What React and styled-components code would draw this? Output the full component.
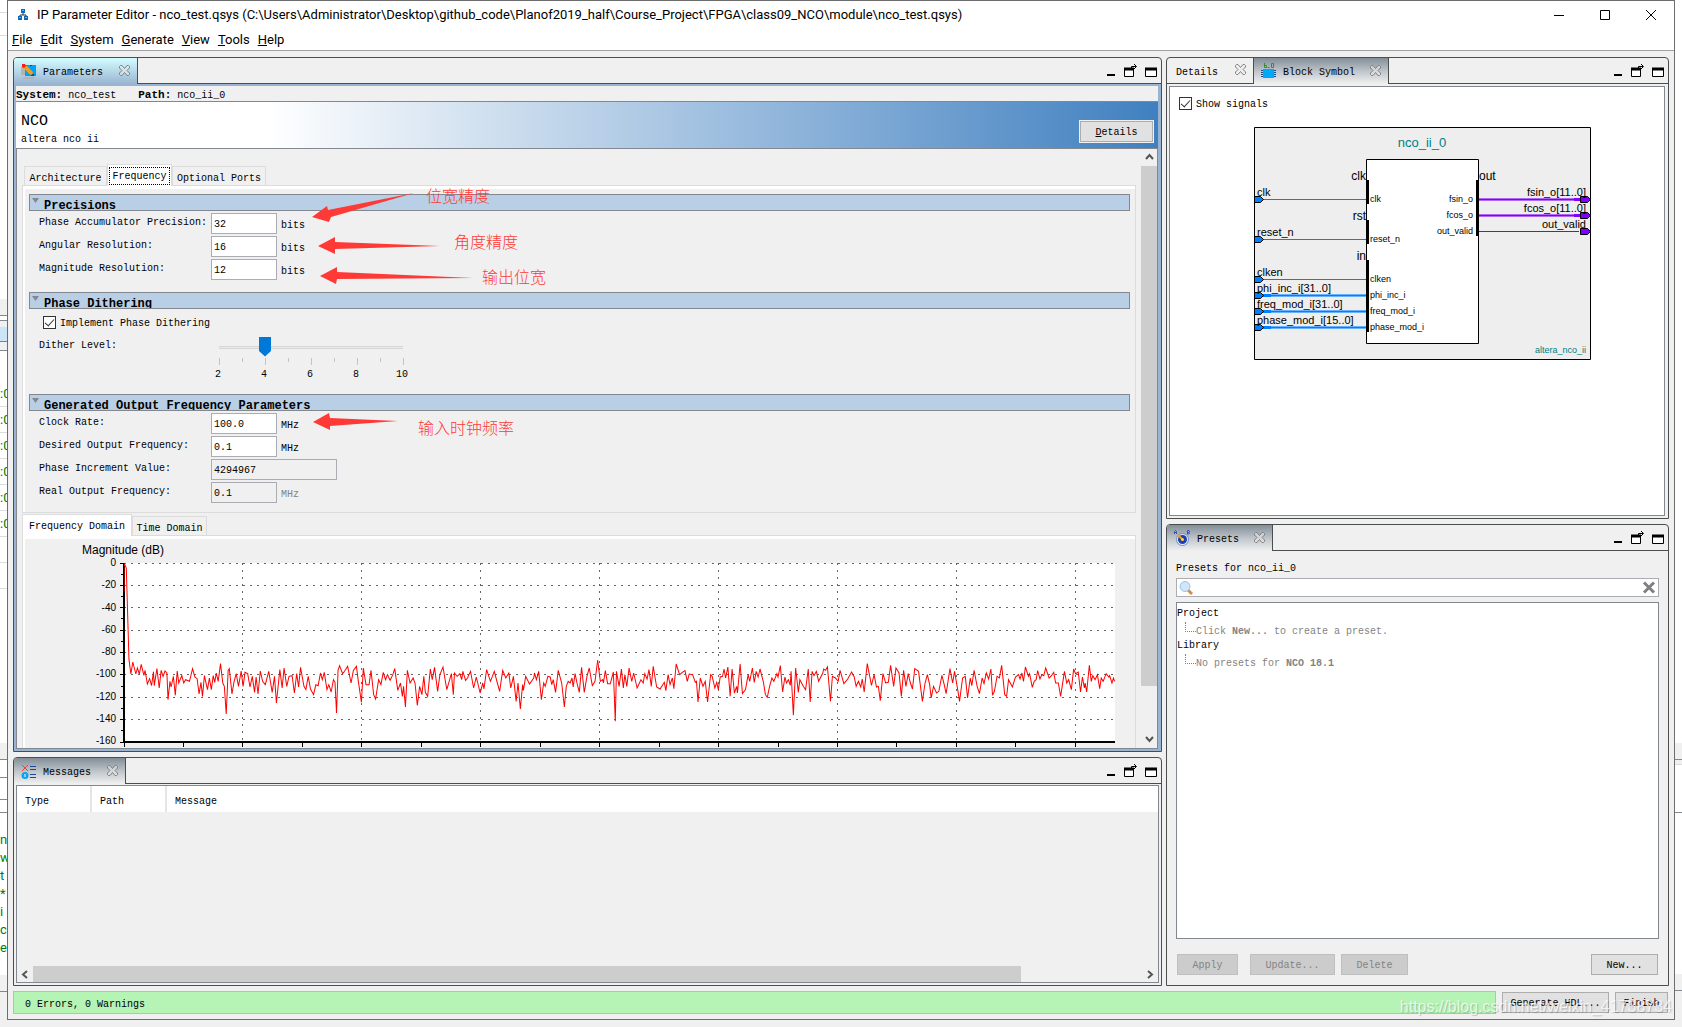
import React, { useState } from "react";
import styled, { createGlobalStyle } from "styled-components";

const mono = `"Liberation Mono", "Noto Sans CJK SC", monospace`;
const sans = `"Liberation Sans", "Noto Sans CJK SC", sans-serif`;
const ui = `Roboto, "Noto Sans CJK SC", sans-serif`;

const GlobalStyle = createGlobalStyle`
  * {
    box-sizing: border-box;
  }
  body {
    margin: 0;
    background: #f0f0f0;
    color: #000;
    font-family: ${mono};
    font-size: 10px;
    line-height: 12px;
    overflow: hidden;
  }
  button, input {
    font: inherit;
    color: inherit;
    margin: 0;
    padding: 0;
  }
`;

/* ---------- desktop and window frame ---------- */

const Desktop = styled.div`
  position: relative;
  display: flex;
  height: 100vh;
  background: #f0f0f0;
`;

const Strip = styled.div`
  flex: none;
  width: 7px;
  overflow: hidden;
  display: flex;
  flex-direction: column;
  background: #fff;
`;

const StripPart = styled.div`
  flex: none;
  height: ${(p) => p.$h}px;
  background: ${(p) => p.$bg || "#fff"};
  border-bottom: 1px solid ${(p) => p.$line || "transparent"};
  display: flex;
  align-items: center;
  overflow: hidden;
  color: #008000;
  font-family: ${ui};
  font-size: 13px;
  white-space: nowrap;
`;

const Window = styled.div`
  flex: 1;
  min-width: 0;
  margin-bottom: 7px;
  border: 1px solid #6d6d6d;
  background: #f0f0f0;
  display: flex;
  flex-direction: column;
`;

const TitleBar = styled.header`
  flex: none;
  height: 27px;
  background: #fff;
  display: flex;
  align-items: center;
  padding: 0 17px 0 10px;
  gap: 9px;
  font-family: ${ui};
  font-size: 13px;
`;

const WindowTitle = styled.h1`
  flex: 1;
  margin: 0;
  font-size: 13px;
  font-weight: 400;
  line-height: 20px;
  white-space: nowrap;
`;

const WindowButtons = styled.div`
  display: flex;
  gap: 34px;
`;

const PlainButton = styled.button`
  border: 0;
  background: none;
  display: flex;
`;

const MenuBar = styled.nav`
  flex: none;
  height: 23px;
  background: #fff;
  border-bottom: 1px solid #a0a0a0;
  display: flex;
  gap: 8px;
  padding-left: 4px;
  font-family: ${ui};
  font-size: 13px;
  line-height: 24px;
`;

const MenuItem = styled.button`
  border: 0;
  background: none;
`;

const Workspace = styled.main`
  flex: 1;
  min-height: 0;
  display: grid;
  grid-template-columns: minmax(0, 1fr) 503px;
  gap: 4px;
  padding: 6px 5px 0;
`;

const Column = styled.div`
  min-height: 0;
  display: flex;
  flex-direction: column;
  gap: 5px;
`;

/* ---------- dockable panel ---------- */

const PanelBox = styled.section`
  flex: ${(p) => (p.$height ? `0 0 ${p.$height}px` : "1 1 0")};
  min-height: 0;
  border: 1px solid #4a4e4e;
  border-radius: 4px 4px 0 0;
  overflow: hidden;
  display: flex;
  flex-direction: column;
`;

const TabStrip = styled.div`
  flex: none;
  height: 26px;
  display: flex;
`;

const tabFill = {
  focused: "linear-gradient(#d5fdff, #99b4d1)",
  active: "linear-gradient(#828e98, #c4c9ce 55%, #f0f0f0)",
  none: "none",
};

const DockTab = styled.div`
  display: flex;
  align-items: center;
  width: ${(p) => p.$width}px;
  padding: 0 7px;
  background: ${(p) => tabFill[p.$state]};
  border-right: 1px solid #4a4e4e;
  border-bottom: ${(p) => (p.$state === "none" ? "1px solid #4a4e4e" : "0")};

  svg {
    flex: none;
  }
`;

const DockTabLabel = styled.span`
  flex: 1;
  padding: 4px 0 0 ${(p) => (p.$icon ? 7 : 2)}px;
  white-space: nowrap;
`;

const StripRest = styled.div`
  flex: 1;
  display: flex;
  justify-content: flex-end;
  align-items: center;
  gap: 8px;
  padding: 1px 4px 0 0;
  border-bottom: 1px solid #4a4e4e;
`;

const CloseIcon = () => (
  <svg width="11" height="13" viewBox="0 0 11 13" fill="#eee" fillOpacity=".5" stroke="#808080">
    <path d="M.5 1.500l1-1h1.500l2.500 3 2.500-3h1.500l1 1v1.500l-2.500 2.500 2.500 2.500v1.500l-1 1h-1.500l-2.500-3-2.500 3h-1.500l-1-1v-1.500l2.500-2.500-2.500-2.500z" />
  </svg>
);

const MinimizeIcon = () => (
  <svg width="8" height="14">
    <path d="M0 10h8v2H0z" />
  </svg>
);

const FloatIcon = () => (
  <svg width="14" height="14" fill="none" stroke="#000">
    <path d="M1.500 4.500h9v8h-9z" fill="#fff" />
    <path d="M1 5h10" strokeWidth="3" />
    <path d="M8.500 4V2.500H13M11 0l2.500 2.500L11 5" />
  </svg>
);

const MaximizeIcon = () => (
  <svg width="12" height="14" fill="none" stroke="#000">
    <path d="M.5 4.500h11v8H.5z" fill="#fff" />
    <path d="M0 5h12" strokeWidth="3" />
  </svg>
);

const Panel = ({ tabs, height, children }) => (
  <PanelBox $height={height}>
    <TabStrip>
      {tabs.map((tab) => (
        <DockTab key={tab.label} $width={tab.width} $state={tab.state}>
          {tab.icon}
          <DockTabLabel $icon={!!tab.icon}>{tab.label}</DockTabLabel>
          <PlainButton aria-label={`Close ${tab.label}`}>
            <CloseIcon />
          </PlainButton>
        </DockTab>
      ))}
      <StripRest>
        <PlainButton aria-label="Minimize panel">
          <MinimizeIcon />
        </PlainButton>
        <PlainButton aria-label="Detach panel">
          <FloatIcon />
        </PlainButton>
        <PlainButton aria-label="Maximize panel">
          <MaximizeIcon />
        </PlainButton>
      </StripRest>
    </TabStrip>
    {children}
  </PanelBox>
);

/* ---------- icons ---------- */

const AppIcon = () => (
  <svg width="10" height="11" viewBox="0 0 10 11">
    <path d="M5 3v3M2 8V6h6v2" fill="none" stroke="#333" />
    <path d="M3 0h4v4H3zM0 7h4v4H0zM6 7h4v4H6z" fill="#1268b8" />
    <path d="M4 1h2v1H4zM1 8h2v1H1zM7 8h2v1H7z" fill="#4db8ff" />
  </svg>
);

const ParametersIcon = () => (
  <svg width="15" height="15" viewBox="0 0 15 15">
    <path d="M0 3h5v8H0zM2 13h11v2H2z" fill="#b4b4b4" />
    <path d="M4 1h11v11H4z" fill="#00a2f3" />
    <path d="M4 1h2v2H4zM9 1h2v1H9zM10 10h3v2h-3z" fill="#174a8c" />
    <path d="M2 3l3-2 7 7-1 3-3-1z" fill="#f0a020" />
    <path d="M1 0h3l1 2-2 2-2-1z" fill="#f02020" />
  </svg>
);

const BlockIcon = () => (
  <svg width="15" height="16" viewBox="0 0 15 16" fill="none">
    <path d="M3.500 0v4.500h2v-2h-2M6.500 4.500h2M10.500.5h2v4h-2z" stroke="#3a8a3a" />
    <path d="M0 7.500h15M0 9.500h15M0 11.500h15M0 13.500h15" stroke="#174a8c" />
    <path d="M2 6h11v9H2z" fill="#00a8fa" />
  </svg>
);

const PresetsIcon = () => (
  <svg width="16" height="16" viewBox="0 0 16 16">
    <circle cx="8.500" cy="9.500" r="6.500" fill="#6f90dc" />
    <circle cx="8.500" cy="9.500" r="5.500" fill="#e4ecfc" />
    <circle cx="8.500" cy="9.500" r="4.500" fill="#1c3fa8" />
    <path d="M4 5l4.500 4.500" stroke="#f0a020" strokeWidth="2" />
    <circle cx="8.500" cy="9.500" r="1.500" fill="#ffd070" />
    <path d="M.5 4V1.500l1-1 1 1V4M.5 2.500h2M13.500 4V.5h1.500l.5 1-.5 1 .5 1-.5.5zM13.500 2.500H15" fill="none" stroke="#3454c0" />
  </svg>
);

const MessagesIcon = () => (
  <svg width="15" height="15" viewBox="0 0 15 15" fill="none">
    <path d="M1 1l6 6M7 1L1 7" stroke="#f04030" />
    <circle cx="4" cy="11.500" r="3.500" fill="#10a0f0" />
    <path d="M4 10v3" stroke="#fff" />
    <path d="M9 2.500h6M9 5.500h6M9 10.500h6M9 13.500h6" stroke="#1848a0" />
  </svg>
);

const SearchIcon = () => (
  <svg width="14" height="14" viewBox="0 0 14 14">
    <path d="M9 9l4 4" stroke="#d09048" strokeWidth="3" />
    <circle cx="6" cy="5.500" r="5" fill="#cfe6fa" stroke="#9cc0e0" />
  </svg>
);

const ClearIcon = () => (
  <svg width="14" height="13" viewBox="0 0 14 13">
    <path d="M2 1.500l10 10M12 1.500l-10 10" stroke="#808080" strokeWidth="3" />
  </svg>
);

const chevrons = {
  up: "M1 6l3.500-4L8 6",
  down: "M1 2l3.500 4L8 2",
  left: "M6 1L2 4.500 6 8",
  right: "M2 1l4 3.500L2 8",
};

const Chevron = ({ dir }) => (
  <svg width="9" height="9" fill="none" stroke="#555" strokeWidth="2">
    <path d={chevrons[dir]} />
  </svg>
);

/* ---------- parameters panel ---------- */

const ParametersBody = styled.div`
  flex: 1;
  min-height: 0;
  border: solid #99b4d1;
  border-width: 2px 3px 2px 2px;
  display: flex;
  flex-direction: column;
`;

const PathRow = styled.div`
  flex: none;
  height: 16px;
  display: flex;
  gap: 22px;
  line-height: 18px;
  border-bottom: 1px solid #828790;
  white-space: pre;

  b {
    font-size: 11px;
  }
`;

const Banner = styled.div`
  flex: none;
  height: 47px;
  display: flex;
  justify-content: space-between;
  align-items: flex-end;
  padding: 0 5px 2px;
  background: linear-gradient(90deg, #fff 22%, #4080c0);
  border-bottom: 1px solid #828790;
`;

const BannerTitle = styled.h2`
  margin: 0;
  font-size: 15px;
  font-weight: 400;
  line-height: 24px;
`;

const BannerAction = styled.div`
  display: flex;
  padding-bottom: 4px;
`;

const Button = styled.button`
  height: 21px;
  width: ${(p) => p.$width}px;
  background: #e1e1e1;
  border: 1px solid #adadad;
  outline: ${(p) => (p.$ring ? "1px solid #f0f0f0" : "0")};
  padding-top: 3px;

  &:disabled {
    background: #ccc;
    border-color: #bfbfbf;
    color: #838383;
  }
`;

const ScrollArea = styled.div`
  flex: 1;
  min-height: 0;
  display: flex;
  border: 1px solid #828790;
  border-top: 0;
`;

const ScrollContent = styled.div`
  position: relative;
  flex: 1;
  min-width: 0;
  overflow: hidden;
  padding: 15px 5px 0;
`;

const ScrollBar = styled.div`
  flex: none;
  display: flex;
  flex-direction: ${(p) => (p.$horizontal ? "row" : "column")};
  justify-content: space-between;
  ${(p) => (p.$horizontal ? "height" : "width")}: 16px;
  background: #f0f0f0;
`;

const ScrollButton = styled.button`
  flex: none;
  width: 16px;
  height: 17px;
  border: 0;
  background: none;
  display: flex;
  align-items: center;
  justify-content: center;
`;

const Thumb = styled.div`
  flex: ${(p) => p.$share};
  background: #cdcdcd;
`;

const Space = styled.div`
  flex: ${(p) => p.$share};
`;

const PageTabs = styled.div`
  height: 21px;
  display: flex;
  align-items: flex-end;
  padding-left: ${(p) => p.$indent || 0}px;
`;

const PageTab = styled.button`
  position: relative;
  height: ${(p) => (p.$active ? 22 : 19)}px;
  width: ${(p) => p.$width}px;
  margin-bottom: ${(p) => (p.$active ? -1 : 0)}px;
  padding: ${(p) => (p.$active ? 0 : 2)}px 0 0;
  border: 1px solid #dcdcdc;
  border-bottom: 0;
  background: ${(p) => (p.$active ? "#fff" : "#f0f0f0")};
  white-space: nowrap;

  span {
    display: block;
    height: 18px;
    margin: 1px;
    line-height: ${(p) => (p.$active ? 18 : 16)}px;
    border: 1px ${(p) => (p.$focused ? "dotted #000" : "solid transparent")};
  }
`;

const Page = styled.div`
  border: 1px solid #dcdcdc;
  box-shadow: inset 2px 3px 0 #fff;
  padding: ${(p) => (p.$chart ? "6px 20px 20px" : "8px 5px 9px 6px")};
  display: flex;
  flex-direction: column;
  gap: ${(p) => (p.$chart ? 0 : 12)}px;
  margin-bottom: 1px;
`;

const SectionTitle = styled.h3`
  display: flex;
  align-items: flex-start;
  gap: 5px;
  height: 17px;
  margin: 0;
  padding: 0 0 0 2px;
  background: #b8cfe5;
  border: 1px solid #828790;
  font-size: 12px;
  line-height: 22px;
  overflow: hidden;

  svg {
    margin-top: 3px;
  }
`;

const Rows = styled.div`
  display: flex;
  flex-direction: column;
  gap: 2px;
  padding: 2px 0 0 10px;
`;

const Row = styled.div`
  display: flex;
  align-items: flex-start;
  height: 21px;
`;

const RowLabel = styled.label`
  width: 172px;
  line-height: 19px;
`;

const TextBox = styled.input`
  width: ${(p) => (p.$wide ? 126 : 66)}px;
  height: 21px;
  padding: 2px 2px 0;
  border: 1px solid #abadb3;
  background: #fff;

  &:read-only {
    background: #f0f0f0;
  }
`;

const Unit = styled.span`
  padding-left: 4px;
  line-height: 25px;
  color: ${(p) => (p.$dim ? "#838383" : "#000")};
`;

const CheckLabel = styled.label`
  display: flex;
  align-items: center;
  gap: 4px;
  height: 17px;
  line-height: 20px;
`;

const Check = styled.input`
  appearance: none;
  width: 13px;
  height: 13px;
  border: 1px solid #333;
  background: #fff;
  display: flex;
  justify-content: center;

  &:checked::after {
    content: "";
    width: 4px;
    height: 8px;
    border: solid #333;
    border-width: 0 1px 1px 0;
    transform: rotate(42deg);
  }
`;

const CheckText = styled.span`
  padding-top: 2px;
`;

const DitherRows = styled.div`
  display: flex;
  flex-direction: column;
  gap: 5px;
  padding: 5px 0 0 10px;

  ${CheckLabel} {
    padding-left: 4px;
  }
`;

const SliderRow = styled.div`
  display: flex;
  align-items: flex-start;
  height: 46px;
`;

const SliderBox = styled.div`
  display: flex;
  flex-direction: column;
  margin-left: 2px;
`;

const Slider = styled.input`
  appearance: none;
  width: 196px;
  height: 22px;
  background: none;

  &::-webkit-slider-runnable-track {
    height: 3px;
    background: linear-gradient(#d6d6d6 1px, #e7eaea 1px 2px, #d6d6d6 2px) center / calc(100% - 12px) 3px no-repeat;
  }

  &::-webkit-slider-thumb {
    appearance: none;
    width: 12px;
    height: 20px;
    margin-top: -9px;
    background: #0078d7;
    clip-path: polygon(0 0, 100% 0, 100% 72%, 50% 100%, 0 72%);
  }
`;

const SliderScale = () => (
  <svg width="196" height="24" fontFamily={mono} fontSize="10" textAnchor="middle">
    {[0, 1, 2, 3, 4, 5, 6, 7, 8].map((i) => (
      <path key={i} d={`M${6 + i * 23} 0v${i % 2 ? 4 : 7}`} stroke="#c4c4c4" shapeRendering="crispEdges" />
    ))}
    {[2, 4, 6, 8, 10].map((n, i) => (
      <text key={n} x={5 + i * 46} y="19">
        {n}
      </text>
    ))}
  </svg>
);

const Section = ({ title, children }) => (
  <div>
    <SectionTitle>
      <svg width="7" height="5">
        <path d="M0 0h7L3.500 5z" fill="#828790" />
      </svg>
      {title}
    </SectionTitle>
    {children}
  </div>
);

const Field = ({ id, label, value, unit, wide, readOnly }) => (
  <Row>
    <RowLabel htmlFor={id}>{label}</RowLabel>
    <TextBox id={id} defaultValue={value} $wide={wide} readOnly={readOnly} />
    {unit && <Unit $dim={readOnly}>{unit}</Unit>}
  </Row>
);

/* ---------- red hand notes over the form ---------- */

const NotesLayer = styled.svg`
  position: absolute;
  left: 0;
  top: 0;
  pointer-events: none;
  font-family: "Noto Sans CJK SC", sans-serif;
  font-size: 16px;
  font-weight: 300;
  fill: #ff3a36;
`;

const Notes = () => (
  <NotesLayer width="560" height="340">
    <path d="M295 68l15-11 1 4L397 44 314 68l-2 5z" />
    <path d="M301 97l17-9v5l105 4-105 3v5z" />
    <path d="M303 127l17-9v5l136 6-136 1-1 5z" />
    <path d="M296 273l16-9 1 5 68 3-68 5v4z" />
    <text x="409" y="53">位宽精度</text>
    <text x="437" y="99">角度精度</text>
    <text x="465" y="134">输出位宽</text>
    <text x="401" y="285">输入时钟频率</text>
  </NotesLayer>
);

/* ---------- frequency chart ---------- */

const ChartCaption = styled.div`
  padding-left: 39px;
  font-family: ${sans};
  font-size: 12px;
  line-height: 16px;
`;

const ChartRow = styled.div`
  display: flex;
  gap: 8px;
  padding-top: 5px;
`;

const AxisLabels = styled.div`
  width: 73px;
  height: 190px;
  margin-top: -6px;
  display: flex;
  flex-direction: column;
  justify-content: space-between;
  text-align: right;
  font-family: ${sans};
  font-size: 10px;
`;

const PlotSvg = styled.svg`
  flex: 1;
  height: 190px;
  overflow: visible;
`;

const levels = [0, -20, -40, -60, -80, -100, -120, -140, -160];

const lowerBand =
  "325,275 325,190 331,205 338,480 343,523 348,487 356,523 360,505 365,523 370,494 377,527 380,512 386,553 392,537 397,558 402,516 404,558 411,507 417,565 422,512 427,530 432,514 437,520 440,600 445,545 448,562 454,530 459,587 464,514 468,550 476,528 481,550 486,540 496,545 504,507 510,532 516,537 521,583 526,548 530,590 535,528 543,570 548,535 553,570 558,528 562,548 566,520 571,545 577,492 583,550 587,560 592,643 597,512 600,507 607,583 612,548 618,522 624,560 631,514 636,560 641,518 648,522 654,562 660,530 666,578 670,532 675,583 681,514 687,545 694,555 703,515 712,578 718,530 723,610 732,510 738,565 743,505 750,560 756,530 764,528 770,580 776,522 781,562 786,503 795,560 800,570 806,530 812,568 820,585 826,555 832,558 838,520 843,540 848,518 855,570 860,555 866,577 872,540 876,548 880,640 884,512 888,498 896,522 901,515 909,500 918,550 924,512 932,500 937,545 945,608 950,505 957,555 965,555 970,512 977,585 982,598 990,540 996,555 1002,518 1008,540 1013,525 1020,542 1027,525 1032,507 1040,572 1047,550 1052,590 1055,560 1060,622 1065,512 1072,550 1080,535 1085,550 1091,617 1097,560 1103,585 1108,530 1112,578 1118,590 1125,508 1130,540 1136,503 1144,575 1150,525 1158,502 1168,570 1180,522 1185,585 1188,520 1195,530 1202,522 1207,540 1210,515 1217,542 1222,535 1230,515 1238,565 1245,532 1255,580 1262,550 1265,568 1272,510 1282,545 1292,515 1300,550 1306,575 1314,512 1322,535 1330,520 1335,565 1342,530 1349,605 1354,550 1360,628 1366,555 1368,572 1374,530 1384,553 1395,535 1397,520 1402,540 1408,515 1415,600 1421,550 1425,560 1432,530 1438,532 1442,555 1446,540 1452,578 1459,512 1468,550 1475,622 1480,560 1485,545 1490,550 1495,535 1498,562 1503,522 1508,550 1514,578 1520,503 1527,578 1534,530 1540,505 1548,558 1555,545 1562,482";

const upperBand =
  "47,362 54,425 60,420 62,430 67,393 73,432 80,432 88,397 93,545 96,395 103,440 109,388 114,445 118,405 123,440 129,385 136,425 141,400 150,445 160,420 166,430 170,402 176,418 181,390 187,440 192,380 201,442 210,448 221,428 225,453 231,405 236,435 242,415 246,447 252,373 261,405 268,398 275,393 281,425 286,403 295,405 302,428 305,425 309,487 315,415 322,440 328,425 334,487 342,405 346,410 353,445 358,428 362,450 367,412 373,410 377,388 381,415 387,382 393,470 398,388 404,460 410,440 412,460 419,373 425,462 433,450 440,405 444,425 451,385 456,428 461,395 466,412 471,388 480,428 485,465 490,473 496,440 502,415 507,425 515,402 518,412 524,378 530,457 536,412 540,430 545,420 550,437 552,395 558,527 564,385 571,458 575,420 584,440 590,450 597,388 602,487 607,395 612,408 618,395 624,425 635,400 637,388 642,392 647,382 655,485 660,410 668,415 675,425 680,392 690,432 700,418 710,397 717,412 722,440 728,425 734,442 738,418 743,457 751,372 762,437 769,405 775,442 780,440 785,483 792,402 799,430 806,428 812,377 820,440 826,385 834,400 840,470 846,392 852,440 858,402 863,427 869,448 875,387 885,395 895,485 902,430 908,405 914,435 918,475 924,440 932,460 938,455 946,407 952,435 957,462 967,387 974,430 979,395 988,455 992,485 1000,415 1007,410 1013,475 1020,415 1024,438 1030,392 1038,440 1044,462 1051,415 1056,432 1062,400 1068,418 1074,388 1078,467 1083,455 1090,410 1096,415 1102,377 1110,465 1115,470 1120,420 1130,442 1138,412 1146,405 1150,418 1155,400 1159,425 1164,382 1172,410 1175,402 1182,443 1187,425 1192,420 1196,393 1202,418 1207,405 1212,408 1217,385 1226,415 1232,408 1238,398 1243,430 1250,430 1256,470 1266,395 1272,430 1277,420 1284,450 1290,388 1295,402 1302,397 1308,457 1313,412 1318,445 1320,430 1324,457 1331,377 1336,425 1340,408 1346,420 1352,405 1358,447 1362,415 1367,425 1375,402 1382,412 1384,408 1390,430 1394,415 1397,425";

const Plot = () => (
  <PlotSvg role="img" aria-label="Magnitude in dB by frequency">
    <rect width="100%" height="179" fill="#fff" />
    <g stroke="#666" strokeDasharray="2 5" shapeRendering="crispEdges">
      {levels.slice(0, -1).map((level) => (
        <line key={level} x1="0" x2="100%" y1={(-level * 179) / 160} y2={(-level * 179) / 160} />
      ))}
      {[12, 24, 36, 48, 60, 72, 84, 96].map((x) => (
        <line key={x} x1={`${x}%`} x2={`${x}%`} y1="0" y2="178" />
      ))}
    </g>
    <g stroke="#000" shapeRendering="crispEdges">
      {levels.map((level) => (
        <line key={level} x1="-4" x2="0" y1={(-level * 179) / 160} y2={(-level * 179) / 160} />
      ))}
      {levels.slice(1).map((level) => (
        <line key={level} x1="-3" x2="0" y1={((-level - 10) * 179) / 160} y2={((-level - 10) * 179) / 160} />
      ))}
      {Array.from({ length: 17 }, (_, i) => (
        <line key={i} x1={`${i * 6}%`} x2={`${i * 6}%`} y1="179" y2="184" />
      ))}
      <line x1="0" x2="0" y1="0" y2="179" strokeWidth="2" />
      <line x1="-1" x2="100%" y1="179" y2="179" strokeWidth="2" />
    </g>
    <svg width="100%" height="179" viewBox="0 0 2588 537" preserveAspectRatio="none" fill="none" stroke="#f00">
      <g transform="translate(-325 -190)">
        <polyline points={lowerBand} vectorEffect="non-scaling-stroke" />
      </g>
      <g transform="translate(1190 -70)">
        <polyline points={upperBand} vectorEffect="non-scaling-stroke" />
      </g>
    </svg>
  </PlotSvg>
);

const Parameters = () => {
  const [dither, setDither] = useState(4);
  return (
    <ParametersBody>
      <PathRow>
        <span>
          <b>System:</b> nco_test
        </span>
        <span>
          <b>Path:</b> nco_ii_0
        </span>
      </PathRow>
      <Banner>
        <div>
          <BannerTitle>NCO</BannerTitle>
          <div>altera nco ii</div>
        </div>
        <BannerAction>
          <Button $width={73} $ring>
            <u>D</u>etails
          </Button>
        </BannerAction>
      </Banner>
      <ScrollArea>
        <ScrollContent>
          <PageTabs $indent={2}>
            <PageTab $width={83}>
              <span>Architecture</span>
            </PageTab>
            <PageTab $width={65} $active $focused>
              <span>Frequency</span>
            </PageTab>
            <PageTab $width={94}>
              <span>Optional Ports</span>
            </PageTab>
          </PageTabs>
          <Page>
            <Section title="Precisions">
              <Rows>
                <Field id="phase-acc" label="Phase Accumulator Precision:" value="32" unit="bits" />
                <Field id="angular" label="Angular Resolution:" value="16" unit="bits" />
                <Field id="magnitude" label="Magnitude Resolution:" value="12" unit="bits" />
              </Rows>
            </Section>
            <Section title="Phase Dithering">
              <DitherRows>
                <CheckLabel>
                  <Check type="checkbox" defaultChecked />
                  <CheckText>Implement Phase Dithering</CheckText>
                </CheckLabel>
                <SliderRow>
                  <RowLabel htmlFor="dither">Dither Level:</RowLabel>
                  <SliderBox>
                    <Slider
                      id="dither"
                      type="range"
                      min="2"
                      max="10"
                      value={dither}
                      onChange={(e) => setDither(e.target.value)}
                    />
                    <SliderScale />
                  </SliderBox>
                </SliderRow>
              </DitherRows>
            </Section>
            <Section title="Generated Output Frequency Parameters">
              <Rows>
                <Field id="clock" label="Clock Rate:" value="100.0" unit="MHz" />
                <Field id="desired" label="Desired Output Frequency:" value="0.1" unit="MHz" />
                <Field id="increment" label="Phase Increment Value:" value="4294967" wide readOnly />
                <Field id="real" label="Real Output Frequency:" value="0.1" unit="MHz" readOnly />
              </Rows>
            </Section>
          </Page>
          <PageTabs>
            <PageTab $width={110} $active>
              <span>Frequency Domain</span>
            </PageTab>
            <PageTab $width={75}>
              <span>Time Domain</span>
            </PageTab>
          </PageTabs>
          <Page $chart>
            <ChartCaption>Magnitude (dB)</ChartCaption>
            <ChartRow>
              <AxisLabels>
                {levels.map((level) => (
                  <span key={level}>{level}</span>
                ))}
              </AxisLabels>
              <Plot />
            </ChartRow>
          </Page>
          <Notes />
        </ScrollContent>
        <ScrollBar>
          <ScrollButton aria-label="Scroll up">
            <Chevron dir="up" />
          </ScrollButton>
          <Thumb $share={522} />
          <Space $share={45} />
          <ScrollButton aria-label="Scroll down">
            <Chevron dir="down" />
          </ScrollButton>
        </ScrollBar>
      </ScrollArea>
    </ParametersBody>
  );
};

/* ---------- messages panel ---------- */

const MessagesBody = styled.div`
  flex: 1;
  margin: 1px 2px 2px;
  border: 1px solid #828790;
  display: flex;
  flex-direction: column;
  justify-content: space-between;
`;

const MessageTable = styled.table`
  width: 100%;
  table-layout: fixed;
  border-collapse: collapse;
  background: #fff;

  th {
    height: 26px;
    padding: 6px 8px 0;
    text-align: left;
    font-weight: 400;
    border-right: 2px solid #e5e5e5;
  }
  th:last-child {
    border-right: 0;
  }
`;

const Messages = () => (
  <MessagesBody>
    <MessageTable>
      <colgroup>
        <col width="74" />
        <col width="75" />
        <col />
      </colgroup>
      <thead>
        <tr>
          <th>Type</th>
          <th>Path</th>
          <th>Message</th>
        </tr>
      </thead>
    </MessageTable>
    <ScrollBar $horizontal>
      <ScrollButton aria-label="Scroll left">
        <Chevron dir="left" />
      </ScrollButton>
      <Thumb $share={988} />
      <Space $share={121} />
      <ScrollButton aria-label="Scroll right">
        <Chevron dir="right" />
      </ScrollButton>
    </ScrollBar>
  </MessagesBody>
);

/* ---------- block symbol panel ---------- */

const SymbolBody = styled.div`
  flex: 1;
  margin: 2px 3px 2px 2px;
  border: 1px solid #828790;
  background: #fff;
  display: flex;
  flex-direction: column;
  padding: 8px 0 0 9px;
`;

const SymbolCanvas = styled.div`
  display: flex;
  justify-content: center;
  padding: 15px 0 0 2px;
`;

const groups = [
  { name: "clk", y: 53, h: 24 },
  { name: "rst", y: 93, h: 24 },
  { name: "in", y: 133, h: 72 },
];

const inputs = [
  { name: "clk", outer: "clk", y: 72 },
  { name: "reset_n", outer: "reset_n", y: 112 },
  { name: "clken", outer: "clken", y: 152 },
  { name: "phi_inc_i", outer: "phi_inc_i[31..0]", y: 168, bus: true },
  { name: "freq_mod_i", outer: "freq_mod_i[31..0]", y: 184, bus: true },
  { name: "phase_mod_i", outer: "phase_mod_i[15..0]", y: 200, bus: true },
];

const outputs = [
  { name: "fsin_o", outer: "fsin_o[11..0]", y: 72, bus: true },
  { name: "fcos_o", outer: "fcos_o[11..0]", y: 88, bus: true },
  { name: "out_valid", outer: "out_valid", y: 104 },
];

const SymbolDrawing = () => (
  <svg width="337" height="233" fontFamily={sans} fontSize="11">
    <path d="M.5.5h336v232H.5z" fill="#eee" stroke="#000" />
    <path d="M112.500 32.500h112v184h-112z" fill="#fff" stroke="#000" />
    <text x="168" y="20" fontSize="13" textAnchor="middle" fill="#008080">
      nco_ii_0
    </text>
    {groups.map((g) => (
      <g key={g.name}>
        <text x="112" y={g.y} fontSize="12" textAnchor="end">
          {g.name}
        </text>
        <rect x="112" y={g.y} width="3" height={g.h} />
      </g>
    ))}
    <text x="225" y="53" fontSize="12">
      out
    </text>
    <rect x="222" y="53" width="3" height="56" />
    {inputs.map((p) => (
      <g key={p.name}>
        {p.bus && <rect x="10" y={p.y - 1} width="102" height="3" fill="#66b2ff" />}
        <rect x="8" y={p.y} width="104" height="1" fill="#007fff" />
        {p.bus && <rect x="8" y={p.y - 1} width="9" height="3" fill="#007fff" />}
        <path d={`M.5 ${p.y - 2.5}h6l3 3-3 3h-6z`} fill="#007fff" stroke="#000" />
        <text x="3" y={p.y - 3}>
          {p.outer}
        </text>
        <text x="116" y={p.y + 3} fontSize="9">
          {p.name}
        </text>
      </g>
    ))}
    {outputs.map((p) => (
      <g key={p.name}>
        {p.bus && <rect x="225" y={p.y - 1} width="100" height="3" fill="#b266f5" />}
        <rect x="225" y={p.y} width="100" height="1" fill="#7f00ff" />
        {p.bus && <rect x="320" y={p.y - 1} width="6" height="3" fill="#7f00ff" />}
        <path d={`M326.500 ${p.y - 2.5}h7l3 3-3 3h-7z`} fill="#7f00ff" stroke="#000" />
        <text x="332" y={p.y - 3} textAnchor="end">
          {p.outer}
        </text>
        <text x="219" y={p.y + 3} fontSize="9" textAnchor="end">
          {p.name}
        </text>
      </g>
    ))}
    <text x="332" y="226" fontSize="9" textAnchor="end" fill="#008080">
      altera_nco_ii
    </text>
  </svg>
);

/* ---------- presets panel ---------- */

const PresetsBody = styled.div`
  flex: 1;
  min-height: 0;
  display: flex;
  flex-direction: column;
  padding: 11px 9px 10px;
`;

const PresetsLabel = styled.label`
  line-height: 14px;
`;

const SearchBox = styled.div`
  display: flex;
  align-items: center;
  height: 19px;
  margin-top: 2px;
  padding: 0 2px;
  border: 1px solid #abadb3;
  background: #fff;

  input {
    flex: 1;
    border: 0;
    outline: 0;
    background: none;
  }
`;

const Tree = styled.ul`
  flex: 1;
  margin: 5px 0 15px;
  padding: 3px 0;
  border: 1px solid #828790;
  background: #fff;
  list-style: none;
  line-height: 16px;

  ul {
    display: flex;
    height: 16px;
    margin: 0 0 0 8px;
    padding: 0;
    list-style: none;
    color: #838383;
    line-height: 20px;
  }
  ul::before {
    content: "";
    width: 10px;
    height: 9px;
    border: dotted #838383;
    border-width: 0 0 1px 1px;
  }
`;

const ButtonRow = styled.div`
  display: flex;
  gap: ${(p) => p.$gap}px;
  padding: 0 ${(p) => p.$inset || 0}px;
`;

const Presets = () => (
  <PresetsBody>
    <PresetsLabel htmlFor="preset-search">Presets for nco_ii_0</PresetsLabel>
    <SearchBox>
      <SearchIcon />
      <input id="preset-search" type="text" />
      <PlainButton aria-label="Clear search">
        <ClearIcon />
      </PlainButton>
    </SearchBox>
    <Tree>
      <li>
        Project
        <ul>
          <li>
            Click <b>New...</b> to create a preset.
          </li>
        </ul>
      </li>
      <li>
        Library
        <ul>
          <li>
            No presets for <b>NCO 18.1</b>
          </li>
        </ul>
      </li>
    </Tree>
    <ButtonRow $gap={12} $inset={1}>
      <Button $width={61} disabled>
        Apply
      </Button>
      <ButtonRow $gap={6}>
        <Button $width={85} disabled>
          Update...
        </Button>
        <Button $width={67} disabled>
          Delete
        </Button>
      </ButtonRow>
      <Space $share={1} />
      <Button $width={67}>New...</Button>
    </ButtonRow>
  </PresetsBody>
);

/* ---------- bottom bar ---------- */

const StatusBar = styled.footer`
  flex: none;
  display: flex;
  align-items: center;
  gap: 6px;
  padding: 5px 6px 5px 5px;
`;

const StatusText = styled.div`
  flex: 1;
  height: 23px;
  padding: 1px 11px 0;
  line-height: 24px;
  background: #b5f4b5;
  border: 1px solid #bcbcbc;
`;

const Watermark = styled.div`
  position: absolute;
  right: 10px;
  bottom: 10px;
  font-family: ${sans};
  font-size: 16px;
  line-height: 20px;
  color: rgba(255, 255, 255, 0.75);
  text-shadow: 1px 1px 1px rgba(0, 0, 0, 0.2);
  pointer-events: none;
`;

/* slivers of the windows that lie behind this one */
const leftStrip = [
  { h: 13, line: "#dcdcdc" },
  { h: 23, line: "#dcdcdc" },
  { h: 263 },
  { h: 17, bg: "#f0f0f0", line: "#828790" },
  { h: 5, bg: "#fff", line: "#828790" },
  { h: 6, bg: "#f0f0f0" },
  { h: 15, bg: "#cce4f7", line: "#4a90c8" },
  { h: 9, bg: "#f0f0f0", line: "#828790" },
  { h: 30 },
  ...Array(6).fill({ h: 26, line: "#dcdcdc", text: ":0" }),
  { h: 26, line: "#dcdcdc" },
  { h: 26, line: "#dcdcdc" },
  { h: 154 },
  { h: 17, bg: "#f0f0f0", line: "#828790" },
  { h: 18, line: "#828790" },
  { h: 22, line: "#828790" },
  { h: 13, line: "#828790" },
  { h: 18 },
  ...["n", "w", "t", "*", "i", "c", "e"].map((text) => ({ h: 18, text })),
  { h: 18 },
  { h: 17, bg: "#f0f0f0", line: "#828790" },
  { h: 40, bg: "#f0f0f0" },
];

const rightStrip = [
  { h: 743 },
  { h: 17, bg: "#f0f0f0", line: "#828790" },
  { h: 5, bg: "#f0f0f0", line: "#dcdcdc" },
  { h: 48, line: "#828790" },
  { h: 161 },
  { h: 17, bg: "#f0f0f0", line: "#828790" },
  { h: 40, bg: "#f0f0f0" },
];

const Backdrop = ({ parts }) => (
  <Strip>
    {parts.map((part, i) => (
      <StripPart key={i} $h={part.h} $bg={part.bg} $line={part.line}>
        {part.text}
      </StripPart>
    ))}
  </Strip>
);

const menus = ["File", "Edit", "System", "Generate", "View", "Tools", "Help"];

export default function App() {
  return (
    <Desktop>
      <GlobalStyle />
      <Backdrop parts={leftStrip} />
      <Window>
        <TitleBar>
          <AppIcon />
          <WindowTitle>
            IP Parameter Editor - nco_test.qsys
            (C:\Users\Administrator\Desktop\github_code\Planof2019_half\Course_Project\FPGA\class09_NCO\module\nco_test.qsys)
          </WindowTitle>
          <WindowButtons>
            <PlainButton aria-label="Minimize">
              <svg width="12" height="12" stroke="#000">
                <path d="M1 6.500h10" />
              </svg>
            </PlainButton>
            <PlainButton aria-label="Maximize">
              <svg width="12" height="12" fill="none" stroke="#000">
                <path d="M1.500 1.500h9v9h-9z" />
              </svg>
            </PlainButton>
            <PlainButton aria-label="Close">
              <svg width="12" height="12" stroke="#000">
                <path d="M1 1l10 10M11 1L1 11" />
              </svg>
            </PlainButton>
          </WindowButtons>
        </TitleBar>
        <MenuBar>
          {menus.map((name) => (
            <MenuItem key={name}>
              <u>{name[0]}</u>
              {name.slice(1)}
            </MenuItem>
          ))}
        </MenuBar>
        <Workspace>
          <Column>
            <Panel tabs={[{ label: "Parameters", width: 124, state: "focused", icon: <ParametersIcon /> }]}>
              <Parameters />
            </Panel>
            <Panel height={229} tabs={[{ label: "Messages", width: 112, state: "active", icon: <MessagesIcon /> }]}>
              <Messages />
            </Panel>
          </Column>
          <Column>
            <Panel
              tabs={[
                { label: "Details", width: 87, state: "none" },
                { label: "Block Symbol", width: 135, state: "active", icon: <BlockIcon /> },
              ]}
            >
              <SymbolBody>
                <CheckLabel>
                  <Check type="checkbox" defaultChecked />
                  <CheckText>Show signals</CheckText>
                </CheckLabel>
                <SymbolCanvas>
                  <SymbolDrawing />
                </SymbolCanvas>
              </SymbolBody>
            </Panel>
            <Panel tabs={[{ label: "Presets", width: 106, state: "active", icon: <PresetsIcon /> }]}>
              <Presets />
            </Panel>
          </Column>
        </Workspace>
        <StatusBar>
          <StatusText>0 Errors, 0 Warnings</StatusText>
          <Button $width={107}>Generate HDL...</Button>
          <Button $width={53}>Finish</Button>
        </StatusBar>
      </Window>
      <Backdrop parts={rightStrip} />
      <Watermark>https://blog.csdn.net/weixin_41738734</Watermark>
    </Desktop>
  );
}
